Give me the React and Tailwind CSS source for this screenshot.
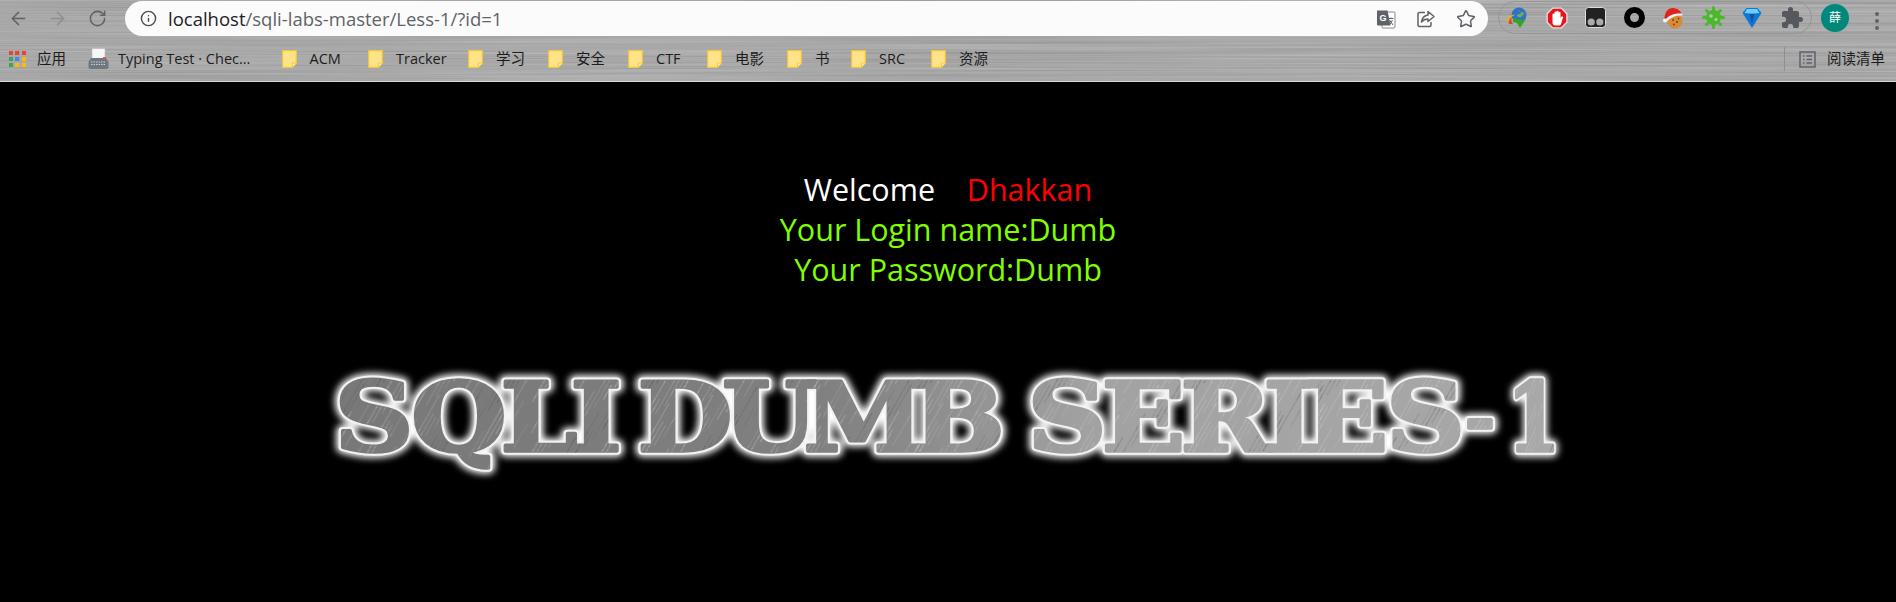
import React from 'react';
import { ArrowLeft, ArrowRight, RotateCw, Info, Star } from 'lucide-react';
import { MdExtension } from 'react-icons/md';

const UI_FONT = "font-['Open_Sans','Noto_Sans_CJK_SC',sans-serif]";

const BOOKMARKS = [
  { label: 'ACM', width: 'w-[86.5px]' },
  { label: 'Tracker', width: 'w-[100px]' },
  { label: '学习', width: 'w-[80px]' },
  { label: '安全', width: 'w-[80px]' },
  { label: 'CTF', width: 'w-[79px]' },
  { label: '电影', width: 'w-[80px]' },
  { label: '书', width: 'w-[64px]' },
  { label: 'SRC', width: 'w-[80px]' },
  { label: '资源', width: 'w-[80px]' },
];

// page x range of every letter in the banner
const BANNER = [
  ['S', 338, 410], ['Q', 418, 500], ['L', 506, 572], ['I', 576, 616], [' ', 630, 630],
  ['D', 644, 726], ['U', 730, 810], ['M', 814, 914], ['B', 918, 999], [' ', 1015, 1015],
  ['S', 1033, 1101], ['E', 1107, 1180], ['R', 1186, 1266], ['I', 1271, 1307], ['E', 1311, 1382],
  ['S', 1391, 1460], ['-', 1480, 1480],
];
const SCALE_X = 1.14;

const scratches = Array.from({ length: 190 }, (_, i) => {
  const x = (i * 37) % 240;
  const y = (i * 53) % 240;
  const len = 14 + ((i * 17) % 46);
  return { x, y, len, light: i % 4 !== 0, o: 0.1 + ((i * 7) % 10) / 60 };
});

const Folder = () => (
  <svg width="15" height="18" viewBox="0 0 15 18" className="shrink-0">
    <path d="M.7.7h13.6v12.6l-4 4H.7z" fill="#ffe38a" stroke="#f3c83c" strokeWidth="1.2" />
    <path d="M14 13h-3.600v4" fill="#fff0b8" stroke="#f3c83c" />
  </svg>
);

const AppsIcon = () => {
  const colors = ['#ea4335', '#ea4335', '#ea4335', '#34a853', '#4285f4', '#fbbc05', '#34a853', '#fbbc05', '#fbbc05'];
  return (
    <div className="grid w-[17px] shrink-0 grid-cols-3 gap-[2px]">
      {colors.map((c, i) => (
        <svg key={i} width="4.300" height="4.300" viewBox="0 0 4 4"><rect width="4" height="4" fill={c} /></svg>
      ))}
    </div>
  );
};

const Typewriter = () => (
  <svg width="21" height="22" viewBox="0 0 21 22" className="shrink-0">
    <rect x="4" y="0.500" width="13" height="10" fill="#f6f6f6" stroke="#bbb" strokeWidth=".6" />
    <path d="M3 10h15l2.500 4v5a2 2 0 0 1-2 2H2.500a2 2 0 0 1-2-2v-5z" fill="#6f7780" />
    <path d="M3 14h15M3 16.500h15" stroke="#c9ced3" strokeWidth="1" strokeDasharray="1.500 1" />
    <rect x="15" y="9" width="3" height="2" fill="#e2574c" />
  </svg>
);

const TranslateIcon = () => (
  <svg width="20" height="20" viewBox="0 0 20 20">
    <rect x="6" y="3" width="13" height="16" rx="1" fill="#fff" stroke="#8a8a8a" />
    <path d="M1 1.500h10.500l3 15H2a1 1 0 0 1-1-1z" fill="#5f6368" />
    <text x="3.500" y="12" fontSize="9" fontWeight="700" fill="#fff" fontFamily="Liberation Sans, sans-serif">G</text>
    <path d="M12.500 9.500h5M15 8.500v1M13.500 16l3-5M13.500 11l3.500 5" stroke="#5f6368" strokeWidth="1" fill="none" />
  </svg>
);

const ShareIcon = () => (
  <svg width="20" height="20" viewBox="0 0 20 20" fill="none" stroke="#5f6368" strokeWidth="1.500">
    <path d="M9 3.500H3.500a1.500 1.500 0 0 0-1.500 1.500v11a1.500 1.500 0 0 0 1.500 1.500h10a1.500 1.500 0 0 0 1.500-1.500v-3" />
    <path d="M12 2.500 18 7.500l-6 5V10c-3 0-5 1-6.500 3 .5-3.500 2.500-6.500 6.500-7z" strokeLinejoin="round" />
  </svg>
);

const IdmIcon = () => (
  <svg width="22" height="22" viewBox="0 0 22 22">
    <circle cx="13" cy="8" r="7.500" fill="#2f6fd0" />
    <path d="M9 3c2 1 3 0 5 1s1 3-1 3-3 2-1 3 4 0 5-2 2-2 2-2" fill="#6db04a" />
    <path d="M1 15c0-5 4-8 8-7-3 1-5 3-4 7z" fill="#e8b21f" />
    <path d="M3 17c-1-3 1-6 3-7-1 2-1 5 1 7z" fill="#d4483b" />
    <path d="M7 11l9 2 4-1-6 9-3-5-4-1z" fill="#35a52a" />
  </svg>
);

const AdblockIcon = () => (
  <svg width="22" height="22" viewBox="0 0 22 22">
    <path d="M6.500.500h9l6 6v9l-6 6h-9l-6-6v-9z" fill="#e4e4e4" />
    <path d="M7 1.800h8L20.200 7v8L15 20.200H7L1.800 15V7z" fill="#e8141c" />
    <path d="M6.500 7.500a1 1 0 0 1 2 0V11V5.500a1 1 0 0 1 2 0V11V4.800a1 1 0 0 1 2 0V11V5.800a1 1 0 0 1 2 0V11l1-1.500a1 1 0 0 1 1.500 1L15 17a2 2 0 0 1-2 1.500H9.500A3 3 0 0 1 6.500 15.500z" fill="#fff" />
  </svg>
);

const MonkeyIcon = () => (
  <svg width="21" height="21" viewBox="0 0 21 21">
    <rect x=".5" y=".5" width="20" height="20" rx="3" fill="#222" stroke="#ddd" />
    <circle cx="6.200" cy="15" r="3.600" fill="#aaa" />
    <circle cx="14.800" cy="15" r="3.600" fill="#aaa" />
  </svg>
);

const RingIcon = () => (
  <svg width="21" height="21" viewBox="0 0 21 21">
    <circle cx="10.500" cy="10.500" r="7.500" fill="none" stroke="#000" strokeWidth="6" />
  </svg>
);

const CookieIcon = () => (
  <svg width="22" height="22" viewBox="0 0 22 22">
    <circle cx="13" cy="14" r="7.500" fill="#d98a35" />
    <circle cx="11" cy="13" r="1" fill="#7a4516" />
    <circle cx="15" cy="15" r="1" fill="#7a4516" />
    <circle cx="12" cy="17.500" r="1" fill="#7a4516" />
    <circle cx="16.500" cy="11.500" r=".9" fill="#7a4516" />
    <path d="M2.500 12C2.500 4 7 1 11 1c4 0 7 2 9 6-5 0-11 1-15 5z" fill="#e1221b" />
    <path d="M4 12c3-4 9-6 16-5.500l.5 2C14 8 9 10 5.500 14z" fill="#f4f4f4" />
    <circle cx="3" cy="13.500" r="2" fill="#f4f4f4" />
  </svg>
);

const VirusIcon = () => (
  <svg width="23" height="23" viewBox="0 0 23 23">
    <circle cx="11.500" cy="11.500" r="7.500" fill="#4cb82d" />
    <g stroke="#4cb82d" strokeWidth="3" strokeLinecap="round">
      <path d="M11.500 1.500v4M11.500 17.500v4M1.500 11.500h4M17.500 11.500h4M4.500 4.500l3 3M15.500 15.500l3 3M18.500 4.500l-3 3M7.500 15.500l-3 3" />
    </g>
    <circle cx="9" cy="10" r="1.800" fill="#b7c9a8" />
    <circle cx="14" cy="13.500" r="1.600" fill="#b7c9a8" />
  </svg>
);

const DiamondIcon = () => (
  <svg width="20" height="22" viewBox="0 0 20 22">
    <path d="M4.500 1h11L19.500 6 10 21 .5 6z" fill="#0a79d8" />
    <path d="M5 2h10l2.500 4-5 .5H7.500l-5-.5z" fill="#6fd0ff" />
    <path d="M7.500 7h5L10 17z" fill="#1d4f9c" />
  </svg>
);

const BrushedMetal = () => (
  <svg className="absolute inset-0 h-full w-full" aria-hidden="true">
    <filter id="brushed" x="0" y="0" width="100%" height="100%" colorInterpolationFilters="sRGB">
      <feTurbulence type="fractalNoise" baseFrequency="0.0025 0.55" numOctaves="3" seed="4" />
      <feColorMatrix values="0.16 0 0 0 0.58  0.16 0 0 0 0.58  0.16 0 0 0 0.58  0 0 0 0 1" />
    </filter>
    <rect width="100%" height="100%" filter="url(#brushed)" />
  </svg>
);

const Banner = () => (
  <svg viewBox="0 360 1896 130" className="mt-[70px] block h-[130px] w-full" role="img" aria-label="SQLI DUMB SERIES- 1">
    <defs>
      <linearGradient id="steel" gradientUnits="userSpaceOnUse" x1="290" y1="0" x2="1370" y2="0">
        <stop offset="0" stopColor="#787878" />
        <stop offset="0.4" stopColor="#808080" />
        <stop offset="0.62" stopColor="#a2a2a2" />
        <stop offset="1" stopColor="#a8a8a8" />
      </linearGradient>
      <pattern id="scratch" patternUnits="userSpaceOnUse" width="240" height="240">
        {scratches.map((s, i) => (
          <line
            key={i}
            x1={s.x}
            y1={s.y}
            x2={s.x + s.len * 0.5}
            y2={s.y - s.len}
            stroke={s.light ? '#e2e2e2' : '#3c3c3c'}
            strokeOpacity={s.o}
            strokeWidth="0.900"
          />
        ))}
      </pattern>
      <filter id="glow" x="-5%" y="-30%" width="110%" height="160%">
        <feGaussianBlur stdDeviation="3.500" />
      </filter>
      <g id="banner-text" fontFamily="'DejaVu Serif', serif" fontWeight="700" fontSize="96" textAnchor="middle" strokeLinejoin="round">
        <text
          transform={`scale(${SCALE_X} 1)`}
          x={BANNER.map(([, a, b]) => ((a + b) / 2 / SCALE_X).toFixed(1)).join(' ')}
          y="452"
          xmlSpace="preserve"
        >
          {BANNER.map(([c]) => c).join('').slice(0, 16)}
          <tspan fontSize="62" dy="-10">-</tspan>
        </text>
        {/* the 1 is narrower than the rest of the face */}
        <text transform="scale(0.8 1)" x="1917" y="452">1</text>
      </g>
    </defs>
    <use href="#banner-text" fill="#fff" stroke="#fff" strokeWidth="12" filter="url(#glow)" />
    <use href="#banner-text" fill="#fff" stroke="#f2f2f2" strokeWidth="7.500" />
    <use href="#banner-text" fill="url(#steel)" stroke="url(#steel)" strokeWidth="3.500" />
    <use href="#banner-text" fill="url(#scratch)" stroke="url(#scratch)" strokeWidth="3.500" />
  </svg>
);

export default function App() {
  return (
    <div className={`h-[602px] w-[1896px] overflow-hidden bg-black ${UI_FONT}`}>
      <header className="relative h-[82px] border-b border-[#d8d8d8]">
        <BrushedMetal />
        <div className="relative flex h-[37px] items-start pt-px">
          <div className="flex h-[35px] w-[125px] shrink-0 items-center pl-[8px]">
            <ArrowLeft size={21} strokeWidth={1.7} className="text-[#5f6368]" />
            <ArrowRight size={21} strokeWidth={1.7} className="ml-[18px] text-[#8d8f92]" />
            <RotateCw size={19} strokeWidth={1.9} className="ml-[20px] text-[#5f6368]" />
          </div>
          <div className="flex h-[35px] w-[1363px] shrink-0 items-center rounded-full bg-[#fbfbfb] pl-[15px]">
            <Info size={17} strokeWidth={2} className="shrink-0 text-[#4a4d50]" />
            <div className="ml-[11px] text-[18.500px] leading-[35px] text-[#5f6368]">
              <span className="text-[#202124]">localhost</span>/sqli-labs-master/Less-1/?id=1
            </div>
            <div className="ml-auto flex items-center gap-[20px] pr-[12px]">
              <TranslateIcon />
              <ShareIcon />
              <Star size={20} strokeWidth={1.8} className="text-[#5f6368]" />
            </div>
          </div>
          <div className="ml-[10px] flex h-[33px] w-[314px] shrink-0 items-center justify-between rounded-full border border-[#969696] pl-[7px] pr-[7px]">
            <IdmIcon />
            <AdblockIcon />
            <MonkeyIcon />
            <RingIcon />
            <CookieIcon />
            <VirusIcon />
            <DiamondIcon />
            <MdExtension size={24} className="text-[#55585c]" />
          </div>
          <div className="ml-[9px] flex h-[28px] w-[28px] shrink-0 translate-y-[3px] items-center justify-center rounded-full bg-[#00897b] text-[12px] text-white">
            薛
          </div>
          <div className="ml-[26px] flex translate-y-[11px] flex-col gap-[3px]">
            <span className="h-[4px] w-[4px] rounded-full bg-[#5f6368]" />
            <span className="h-[4px] w-[4px] rounded-full bg-[#5f6368]" />
            <span className="h-[4px] w-[4px] rounded-full bg-[#5f6368]" />
          </div>
        </div>
        <nav className="relative flex h-[44px] items-center pl-[9px] text-[14.500px] leading-none text-[#1c1c1c]">
          <div className="flex w-[79px] shrink-0 items-center">
            <AppsIcon />
            <span className="ml-[11px]">应用</span>
          </div>
          <div className="flex w-[193.500px] shrink-0 items-center">
            <Typewriter />
            <span className="ml-[9px] whitespace-nowrap">Typing Test · Chec...</span>
          </div>
          {BOOKMARKS.map((b) => (
            <div key={b.label} className={`flex shrink-0 items-center ${b.width}`}>
              <Folder />
              <span className="ml-[13px]">{b.label}</span>
            </div>
          ))}
          <div className="ml-auto flex h-[24px] items-center border-l border-[#8f8f8f] pl-[14px] pr-[11px]">
            <svg width="17" height="17" viewBox="0 0 17 17" fill="none" stroke="#5f6368" strokeWidth="1.500">
              <rect x="1" y="1" width="15" height="15" />
              <path d="M4 5h1.500M7.500 5H13M4 8.500h1.500M7.500 8.500H13M4 12h1.500M7.500 12H13" />
            </svg>
            <span className="ml-[11px]">阅读清单</span>
          </div>
        </nav>
      </header>
      <main className="pt-[87px]">
        <div className="text-center font-['Open_Sans',sans-serif] text-[30.500px] font-medium leading-[40px] text-[#7fff00]">
          <div className="text-white">
            Welcome&nbsp;&nbsp;&nbsp; <span className="text-[#ff0000]">Dhakkan</span>
          </div>
          <div>Your Login name:Dumb</div>
          <div>Your Password:Dumb</div>
        </div>
        <Banner />
      </main>
    </div>
  );
}
